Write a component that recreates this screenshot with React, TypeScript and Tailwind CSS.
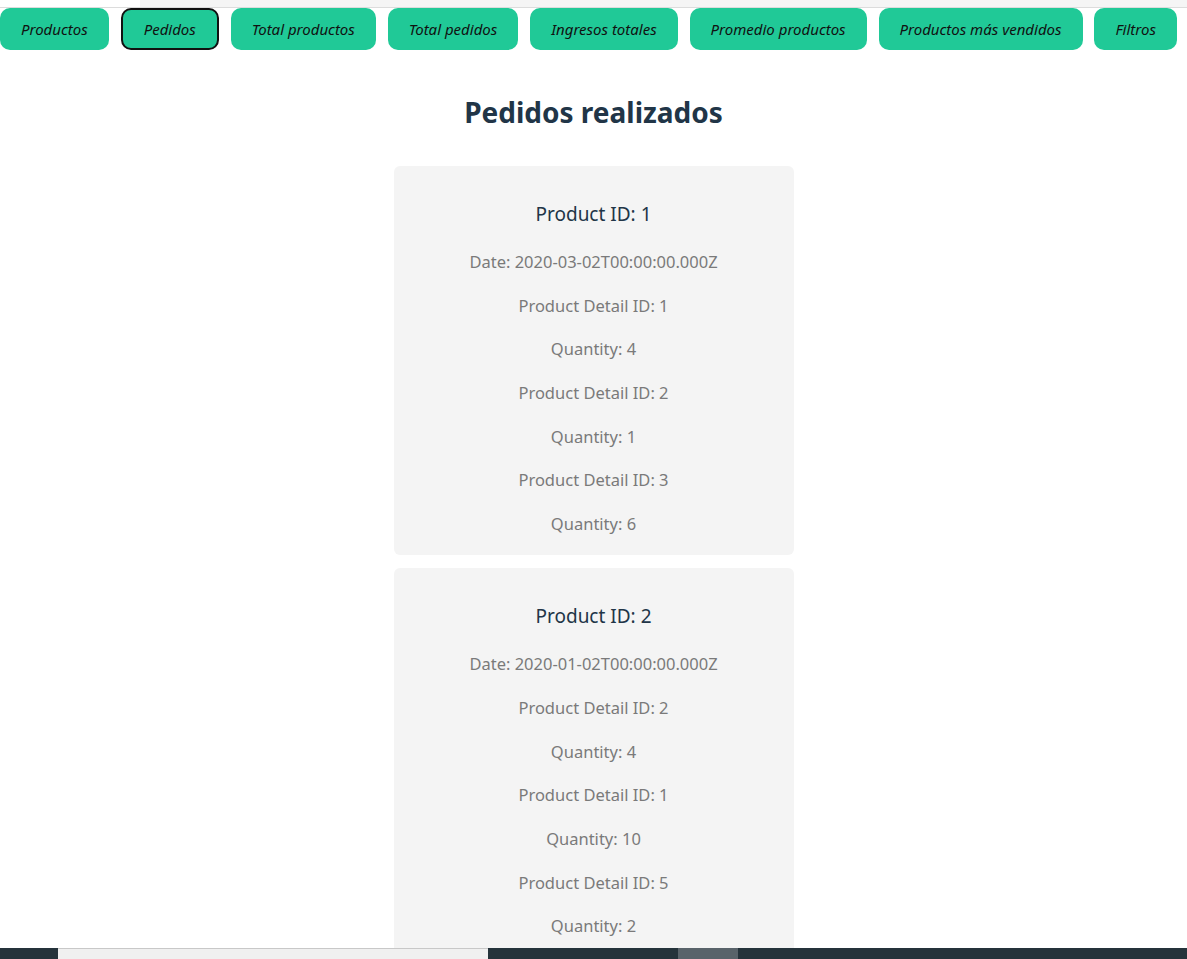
import React, { useState } from "react";

const tabs = [
  "Productos",
  "Pedidos",
  "Total productos",
  "Total pedidos",
  "Ingresos totales",
  "Promedio productos",
  "Productos más vendidos",
  "Filtros",
];

const orders = [
  {
    productId: 1,
    date: "2020-03-02T00:00:00.000Z",
    details: [
      { id: 1, quantity: 4 },
      { id: 2, quantity: 1 },
      { id: 3, quantity: 6 },
    ],
  },
  {
    productId: 2,
    date: "2020-01-02T00:00:00.000Z",
    details: [
      { id: 2, quantity: 4 },
      { id: 1, quantity: 10 },
      { id: 5, quantity: 2 },
    ],
  },
];

const OrderCard = ({ order }: { order: (typeof orders)[number] }) => {
  return (
    <div className="w-[400px] bg-[#f4f4f4] rounded-[6px] pt-[34px] pb-[19px] flex flex-col items-center text-center">
      <h3 className="text-[19px] leading-[28px] text-[#213547]">Product ID: {order.productId}</h3>
      <div className="mt-[22px] flex flex-col gap-[19.7px] text-[16.5px] leading-[24px] text-[#7a7a7a]">
        <p>Date: {order.date}</p>
        {order.details.map((d, i) => (
          <React.Fragment key={i}>
            <p>Product Detail ID: {d.id}</p>
            <p>Quantity: {d.quantity}</p>
          </React.Fragment>
        ))}
      </div>
    </div>
  );
};

const App = () => {
  const [active, setActive] = useState("Pedidos");

  return (
    <div className="min-h-screen bg-white font-['Noto_Sans','Open_Sans',sans-serif]">
      {/* browser chrome leftover */}
      <div className="flex h-[8px] border-b border-[#dcdcdc]">
        <div className="w-[140px] bg-white" />
        <div className="flex-1 bg-[#f5f5f5]" />
      </div>

      <div className="w-[1177px] flex justify-between">
        {tabs.map((tab) => (
          <button
            key={tab}
            onClick={() => setActive(tab)}
            className={
              active === tab
                ? "h-[42px] px-[21px] rounded-[10px] bg-[#20c997] border-2 border-[#111] italic text-[15px] text-[#111]"
                : "h-[42px] px-[19px] rounded-[10px] bg-[#20c997] border-2 border-transparent italic text-[15px] text-[#111]"
            }
          >
            {tab}
          </button>
        ))}
      </div>

      <h1 className="mt-[44px] text-center text-[28px] leading-[36px] font-bold text-[#213547]">
        Pedidos realizados
      </h1>

      <div className="mt-[36px] flex flex-col items-center gap-[13px] pb-10">
        {orders.map((o) => (
          <OrderCard key={o.productId} order={o} />
        ))}
      </div>

      {/* taskbar strip over the page bottom */}
      <div className="fixed bottom-0 left-0 right-0 h-[11px] bg-[#25333b] flex">
        <div className="ml-[58px] w-[430px] bg-[#f0f0f0] border-t border-[#c8c8c8]" />
        <div className="ml-[190px] w-[60px] bg-[#59636a]" />
      </div>
    </div>
  );
};

export default App;
